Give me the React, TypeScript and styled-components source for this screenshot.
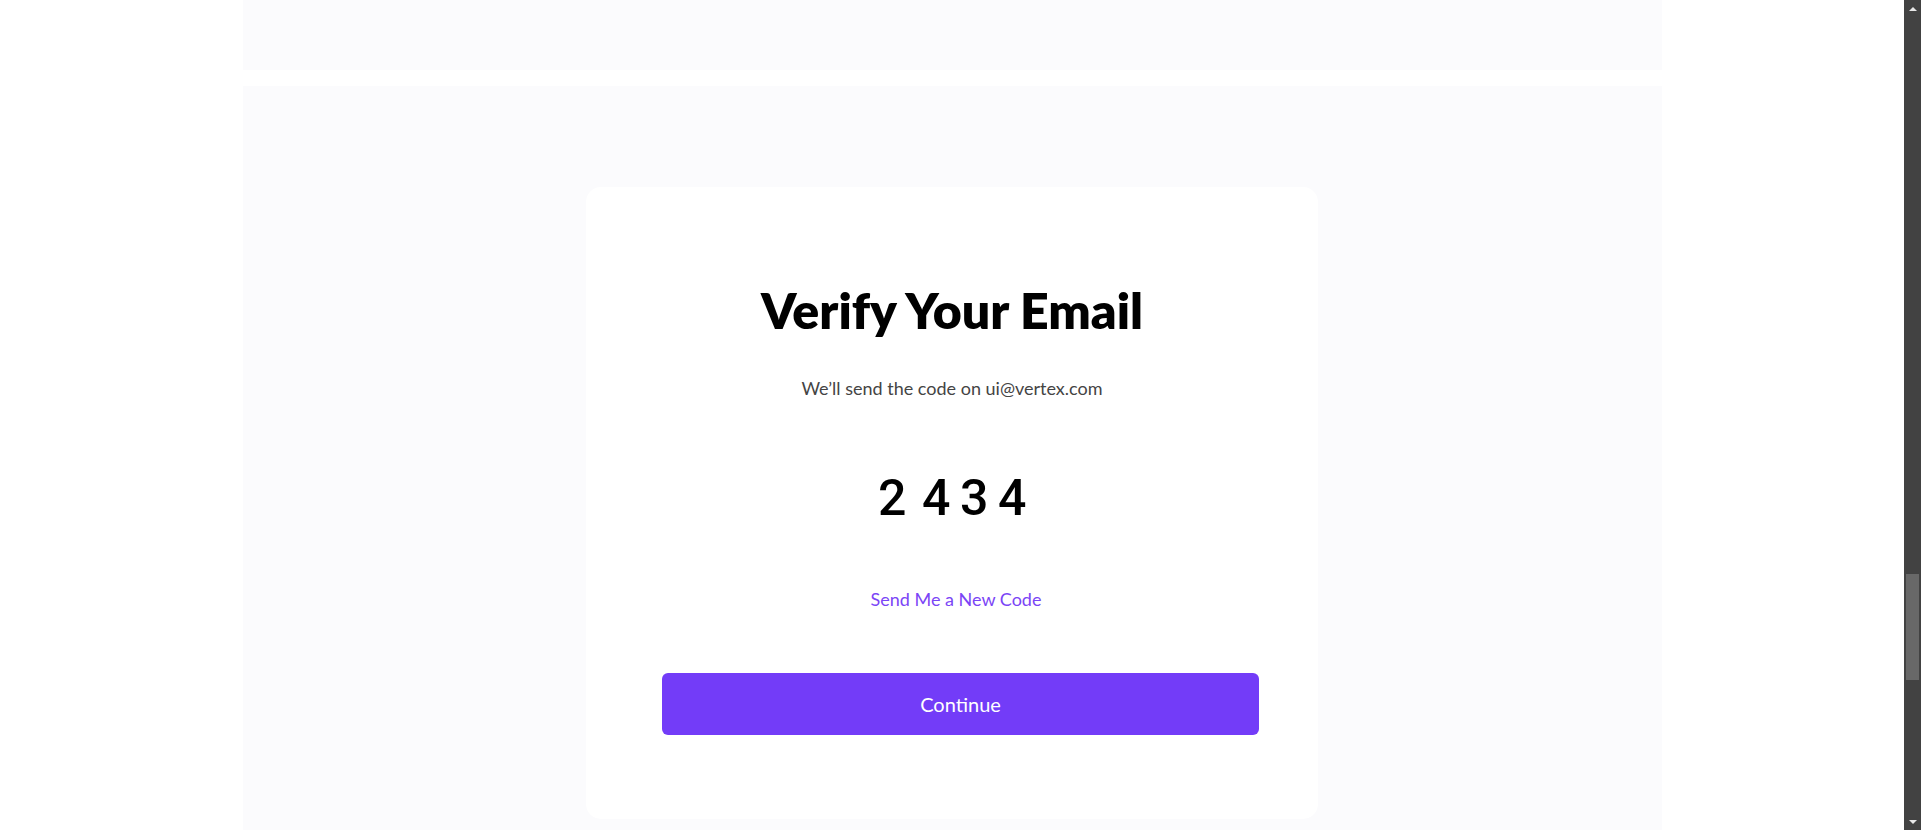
import styled, { createGlobalStyle } from 'styled-components'

const GlobalStyle = createGlobalStyle`
  body {
    margin: 0;
    padding-right: 17px;
    background: #ffffff;
    font-family: 'Lato', 'Liberation Sans', sans-serif;
    color: #000000;
  }
  * {
    box-sizing: border-box;
  }
`

const Page = styled.div`
  max-width: 1419px;
  margin: 0 auto;
  display: flex;
  flex-direction: column;
  gap: 16px;
`

const PreviewTail = styled.div`
  height: 70px;
  background: #fbfbfd;
`

const Preview = styled.section`
  background: #fbfbfd;
  display: flex;
  justify-content: center;
  padding: 101px 0 120px;
`

const Card = styled.div`
  width: 732px;
  background: #ffffff;
  border-radius: 15px;
  padding: 93px 0 84px;
  display: flex;
  flex-direction: column;
  align-items: center;
`

const Title = styled.h1`
  margin: 0;
  font-size: 50px;
  font-weight: 800;
  line-height: 1.2;
  color: #000000;
`

const Subtitle = styled.p`
  margin: 38px 0 0;
  font-size: 18px;
  line-height: 1.2;
  color: #444444;
`

const CodeRow = styled.div`
  margin-top: 68px;
  display: flex;
  gap: 10px;
`

const Digit = styled.span`
  width: 28px;
  text-align: center;
  font-family: 'Roboto', 'Liberation Sans', sans-serif;
  font-size: 50px;
  font-weight: 500;
  line-height: 1.2;
  color: #000000;

  &:first-child {
    margin-right: 6px;
  }
`

const ResendLink = styled.a`
  margin: 61px 0 0 8px;
  font-size: 18px;
  line-height: 1.2;
  color: #7b45f6;
  text-decoration: none;
  cursor: pointer;
`

const ContinueButton = styled.button`
  margin: 63px 0 0 17px;
  width: 597px;
  height: 62px;
  border: 0;
  border-radius: 6px;
  background: #733cf8;
  color: #ffffff;
  font-family: 'Lato', 'Liberation Sans', sans-serif;
  font-size: 20px;
  cursor: pointer;
`

/* window scrollbar, drawn over the right edge */
const ScrollRail = styled.div`
  position: fixed;
  top: 0;
  right: 0;
  width: 17px;
  height: 100vh;
  background: #424242;
  display: flex;
  flex-direction: column;
`

const RailArrow = styled.div<{ $down?: boolean }>`
  height: 17px;
  display: flex;
  align-items: center;
  justify-content: center;

  &::before {
    content: '';
    border-left: 4px solid transparent;
    border-right: 4px solid transparent;
    ${(p) => (p.$down ? 'border-top: 4px solid #e8e8e8;' : 'border-bottom: 4px solid #e8e8e8;')}
  }
`

const RailTrack = styled.div`
  flex: 1;
  padding: 0 2px;
`

const RailThumb = styled.div`
  margin-top: 557px;
  height: 106px;
  background: #686868;
`

const code = ['2', '4', '3', '4']

export function App() {
  return (
    <>
      <GlobalStyle />
      <Page>
        <PreviewTail />
        <Preview>
          <Card>
            <Title>Verify Your Email</Title>
            <Subtitle>We’ll send the code on ui@vertex.com</Subtitle>
            <CodeRow>
              {code.map((d, i) => (
                <Digit key={i}>{d}</Digit>
              ))}
            </CodeRow>
            <ResendLink>Send Me a New Code</ResendLink>
            <ContinueButton type="button">Continue</ContinueButton>
          </Card>
        </Preview>
      </Page>
      <ScrollRail>
        <RailArrow />
        <RailTrack>
          <RailThumb />
        </RailTrack>
        <RailArrow $down />
      </ScrollRail>
    </>
  )
}

export default App
